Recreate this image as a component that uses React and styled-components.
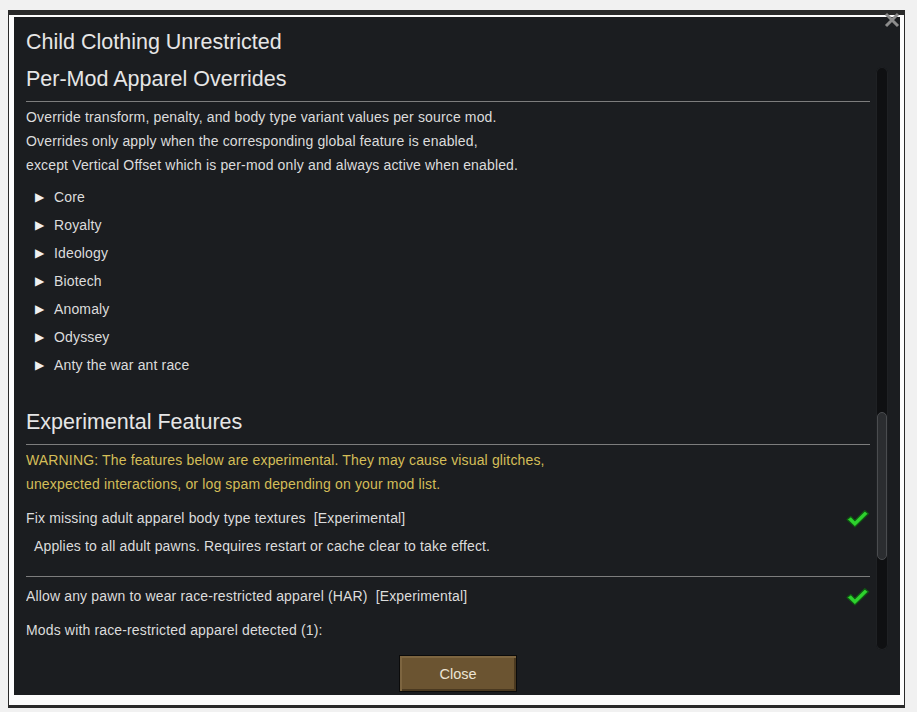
import styled, { createGlobalStyle } from "styled-components"

const GlobalStyle = createGlobalStyle`
  html, body {
    margin: 0;
    padding: 0;
    background: #f1f1f1;
  }
  body {
    font-family: 'Liberation Sans', Arial, sans-serif;
  }
`

const Screen = styled.div`
  width: 917px;
  height: 712px;
  padding: 10px 12px 4px 8px;
  box-sizing: border-box;
`
const Frame = styled.div`
  position: relative;
  height: 100%;
  box-sizing: border-box;
  border: 1px solid #2a2a2a;
  border-top-width: 5px;
  border-bottom-width: 3px;
  background: #fdfdfd;
  padding: 2px 4px 10px 5px;
`
const Panel = styled.div`
  height: 100%;
  box-sizing: border-box;
  background: #1b1d20;
  display: flex;
  flex-direction: column;
  padding: 10px 12px 3px 12px;
  color: #dedede;
`
const Title = styled.h1`
  margin: 0;
  font-size: 21.5px;
  font-weight: normal;
  line-height: 30px;
  color: #e6e6e6;
`
const CloseX = styled.div`
  position: absolute;
  top: -3px;
  right: 4px;
  width: 16px;
  height: 16px;
`
const ScrollArea = styled.div`
  margin-top: 8px;
  flex: 1;
  min-height: 0;
  display: flex;
  gap: 6px;
`
const Content = styled.div`
  flex: 1;
  overflow: hidden;
`
const Scrollbar = styled.div`
  width: 12px;
  margin-top: 2px;
  border-radius: 6px;
  background: #0f1012;
  box-shadow: inset 0 0 0 1px #1f2124;
  position: relative;
`
const Thumb = styled.div`
  position: absolute;
  left: 1px;
  right: 1px;
  top: 345px;
  height: 148px;
  border-radius: 5px;
  background: #2b2d30;
  border: 1px solid #4a4c4f;
  box-sizing: border-box;
`
const Heading = styled.h2`
  margin: ${p => p.$top || 0}px 0 0;
  font-size: 21.5px;
  font-weight: normal;
  line-height: 28px;
  padding-bottom: 8px;
  border-bottom: 1px solid #7d7d7d;
  color: #e6e6e6;
`
const Text = styled.div`
  font-size: 14px;
  letter-spacing: 0.15px;
  line-height: 24px;
  white-space: nowrap;
  margin-top: ${p => p.$top || 0}px;
  padding-left: ${p => p.$indent || 0}px;
  color: ${p => (p.$warn ? "#d4bd58" : "#dcdcdc")};
`
const List = styled.ul`
  list-style: none;
  margin: 6px 0 0;
  padding: 0;
`
const Item = styled.li`
  display: flex;
  align-items: center;
  height: 28px;
  font-size: 14px;
  letter-spacing: 0.15px;
  color: #dcdcdc;
`
const Arrow = styled.span`
  width: 28px;
  padding-left: 9px;
  box-sizing: border-box;
  font-size: 12px;
  color: #f0f0f0;
`
const CheckRow = styled.div`
  display: flex;
  align-items: center;
  justify-content: space-between;
  height: 24px;
  margin-top: ${p => p.$top || 0}px;
  font-size: 14px;
  letter-spacing: 0.15px;
  color: #dcdcdc;
`
const Rule = styled.div`
  margin-top: ${p => p.$top || 0}px;
  border-top: 1px solid #7d7d7d;
`
const Footer = styled.div`
  display: flex;
  justify-content: center;
  padding-top: 5px;
`
const Button = styled.button`
  width: 118px;
  height: 37px;
  margin-left: 2px;
  background: #6b5431;
  border: 1px solid #0b0b0b;
  box-shadow: inset 2px 2px 0 #7d6540, inset -2px -2px 0 #4a3920;
  color: #ece4d4;
  font-family: 'Liberation Sans', Arial, sans-serif;
  font-size: 14.5px;
  cursor: pointer;
`

const Check = () => (
  <svg width="25" height="21" viewBox="0 0 24 20">
    <path
      d="M2 11 L5.5 8 L9.5 12 L19 2.5 L22.5 5.5 L9.5 18 Z"
      fill="#2ed12e"
      stroke="#0f5a12"
      strokeWidth="1.2"
      strokeLinejoin="round"
    />
  </svg>
)

const mods = ["Core", "Royalty", "Ideology", "Biotech", "Anomaly", "Odyssey", "Anty the war ant race"]

const App = () => {
  return (
    <Screen>
      <GlobalStyle />
      <Frame>
        <CloseX>
          <svg width="16" height="16" viewBox="0 0 16 16">
            <path d="M2 2 L14 14 M14 2 L2 14" stroke="#8c8c8c" strokeWidth="3" />
          </svg>
        </CloseX>
        <Panel>
          <Title>Child Clothing Unrestricted</Title>
          <ScrollArea>
            <Content>
              <Heading>Per-Mod Apparel Overrides</Heading>
              <Text $top={3}>Override transform, penalty, and body type variant values per source mod.</Text>
              <Text>Overrides only apply when the corresponding global feature is enabled,</Text>
              <Text>except Vertical Offset which is per-mod only and always active when enabled.</Text>
              <List>
                {mods.map(m => (
                  <Item key={m}>
                    <Arrow>▶</Arrow>
                    {m}
                  </Item>
                ))}
              </List>
              <Heading $top={29}>Experimental Features</Heading>
              <Text $top={3} $warn>WARNING: The features below are experimental. They may cause visual glitches,</Text>
              <Text $warn>unexpected interactions, or log spam depending on your mod list.</Text>
              <CheckRow $top={10}>
                <span>Fix missing adult apparel body type textures&nbsp; [Experimental]</span>
                <Check />
              </CheckRow>
              <Text $top={4} $indent={8}>Applies to all adult pawns. Requires restart or cache clear to take effect.</Text>
              <Rule $top={18} />
              <CheckRow $top={7}>
                <span>Allow any pawn to wear race-restricted apparel (HAR)&nbsp; [Experimental]</span>
                <Check />
              </CheckRow>
              <Text $top={10}>Mods with race-restricted apparel detected (1):</Text>
            </Content>
            <Scrollbar>
              <Thumb />
            </Scrollbar>
          </ScrollArea>
          <Footer>
            <Button>Close</Button>
          </Footer>
        </Panel>
      </Frame>
    </Screen>
  )
}

export default App
